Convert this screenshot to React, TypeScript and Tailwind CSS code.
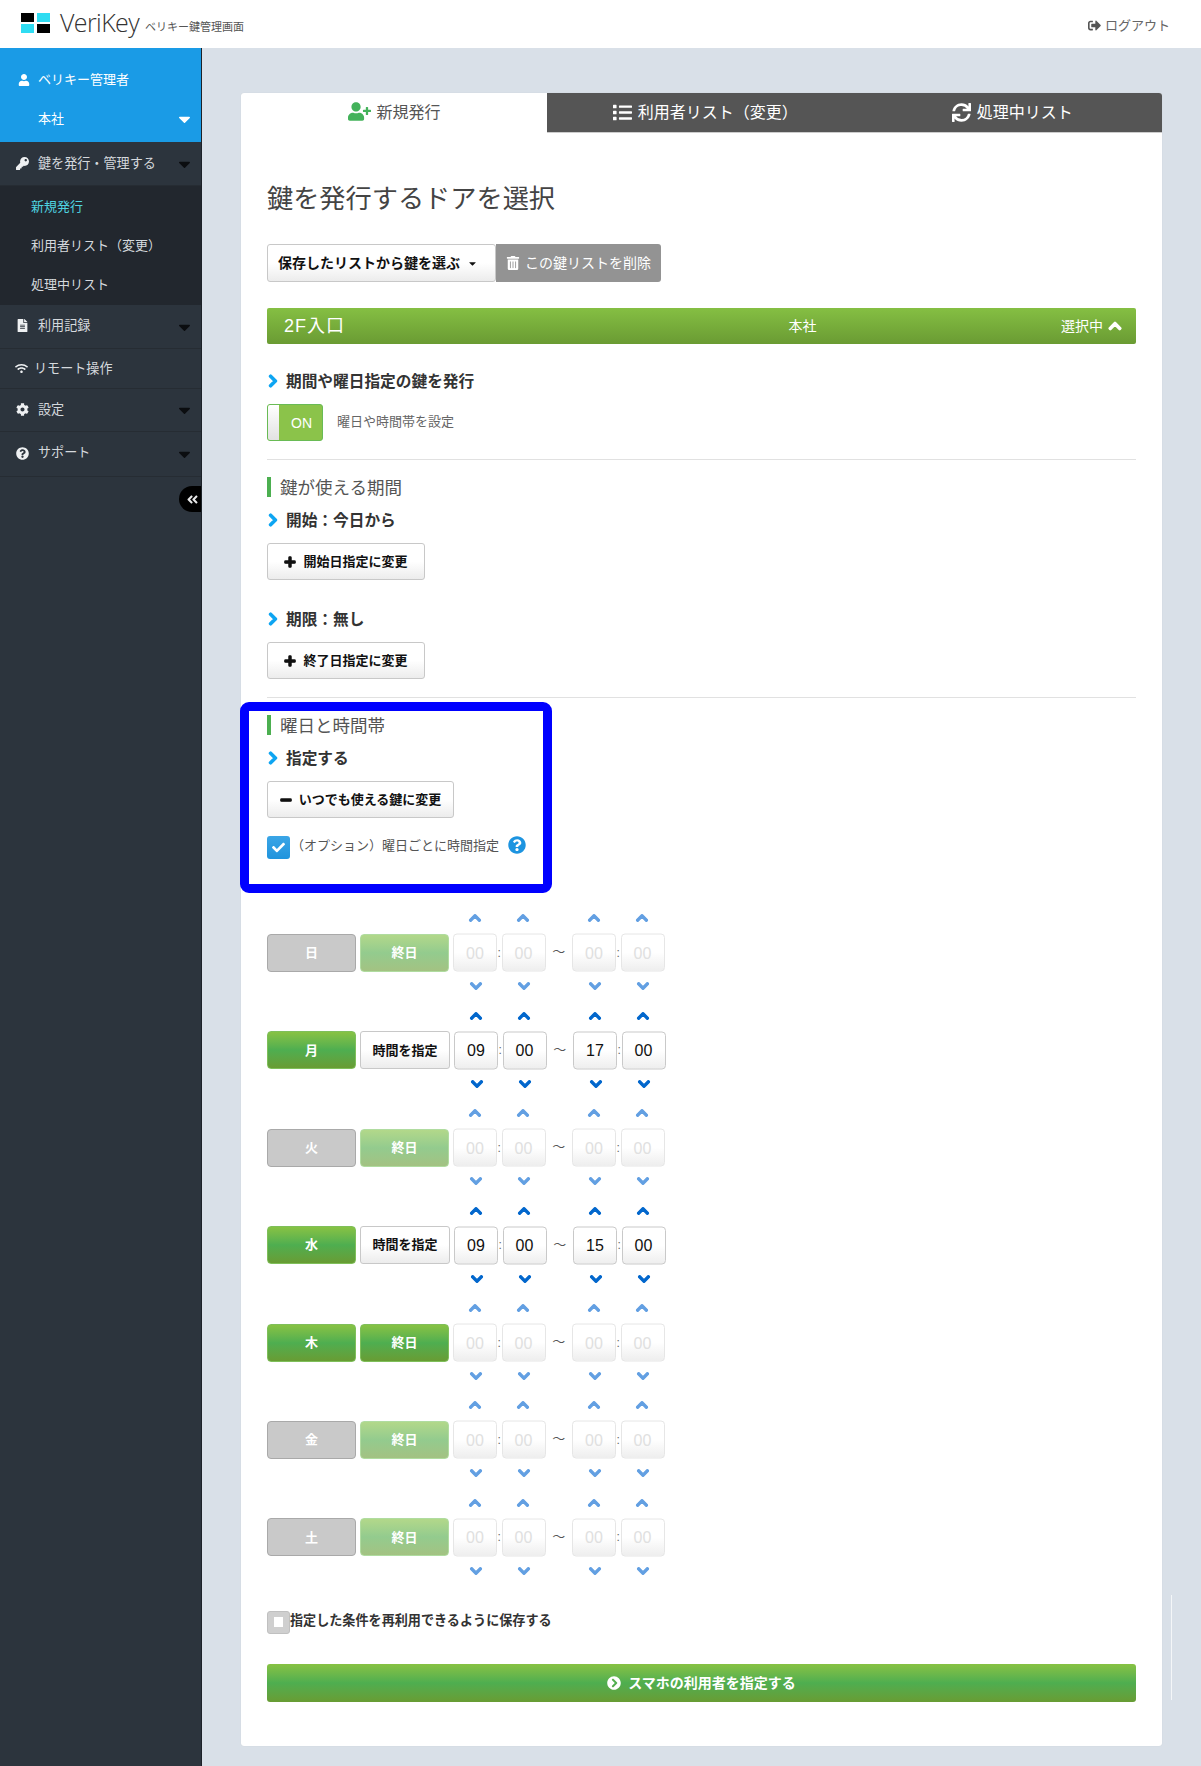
import React from "react";
import {
  FaUser, FaKey, FaFileAlt, FaWifi, FaCog, FaQuestionCircle, FaAngleDoubleLeft, FaUserPlus, FaList, FaSync,
  FaSignOutAlt, FaChevronUp, FaChevronDown, FaChevronRight, FaPlus, FaMinus, FaTrashAlt, FaCheck,
  FaChevronCircleRight, FaCaretDown,
} from "react-icons/fa";

const greenBtn = "bg-gradient-to-b from-[#87c243] via-[#4eae50] to-[#689c33]";
const whiteBtn = "bg-gradient-to-b from-white via-white to-[#ececec] border border-[#c8c8c8] rounded-[3px]";
const thick = "[stroke-width:50px]";

function Caret({ white }: { white?: boolean }) {
  return <FaCaretDown className={`absolute right-[7px] top-1/2 -translate-y-1/2 text-[19px] ${white ? "text-white" : "text-[#0b0d10]"}`} />;
}

function SideItem({ icon, label, h, caret, pl = "pl-[38px]", iconLeft = "left-[16px]", extra = "" }: { icon: React.ReactNode; label: string; h: string; caret?: boolean; pl?: string; iconLeft?: string; extra?: string }) {
  return (
    <div className={`relative flex items-center ${h} ${pl} ${extra} border-b border-[#262c33] text-[13.1px] text-[#d5d9dd]`}>
      <span className={`absolute ${iconLeft} text-[#eef0f2] text-[13px]`}>{icon}</span>
      {label}
      {caret && <Caret />}
    </div>
  );
}

function Heading({ children }: { children: React.ReactNode }) {
  return (
    <div className="flex items-center h-6 pt-[2px] text-[15.7px] font-bold text-[#333]">
      <FaChevronRight className={`text-[#0ea5f2] text-[14px] mr-[6px] ml-[-1px] mt-[-2px] ${thick}`} />
      {children}
    </div>
  );
}

function Section({ children, className = "" }: { children: React.ReactNode; className?: string }) {
  return (
    <div className={`flex items-center h-5 text-[17.5px] text-[#555] ${className}`}>
      <span className="w-1 h-5 bg-[#4caf50] mr-[9px]" />
      <span className="mt-[2px]">{children}</span>
    </div>
  );
}

function ActionBtn({ icon, label, w, className = "" }: { icon: React.ReactNode; label: string; w: string; className?: string }) {
  return (
    <div className={`flex items-center justify-center gap-[7px] h-[37px] ${w} ${whiteBtn} text-[13px] font-bold text-[#111] ${className}`}>
      {icon}
      {label}
    </div>
  );
}

function TimeBox({ v, on }: { v: string; on: boolean }) {
  return (
    <div className="flex flex-col items-center justify-center gap-[9px] w-[44px] pb-[1px]">
      <FaChevronUp className={`text-[13px] -translate-x-[0.5px] translate-y-[0.5px] ${thick} ${on ? "text-[#0066cc]" : "text-[#629fe2]"}`} />
      <div className={`flex items-center justify-center w-[44px] h-[38px] pt-[1px] rounded-[4px] translate-y-[0.5px] bg-gradient-to-b from-white via-white to-[#eeeeee] border ${on ? "border-[#c9c9c9] text-[#111]" : "border-[#e6e6e6] text-[#e0e0e0]"} text-[16px] font-['Liberation_Sans',sans-serif]`}>
        {v}
      </div>
      <FaChevronDown className={`text-[13px] translate-x-[0.5px] -translate-y-[0.5px] ${thick} ${on ? "text-[#0066cc]" : "text-[#629fe2]"}`} />
    </div>
  );
}

function Colon() {
  return <span className="w-[4.5px] text-center text-[12px] text-[#666] leading-none">:</span>;
}

type Row = { day: string; dayOn: boolean; mode: "off" | "all" | "time"; t?: [string, string, string, string] };

const rows: Row[] = [
  { day: "日", dayOn: false, mode: "off" },
  { day: "月", dayOn: true, mode: "time", t: ["09", "00", "17", "00"] },
  { day: "火", dayOn: false, mode: "off" },
  { day: "水", dayOn: true, mode: "time", t: ["09", "00", "15", "00"] },
  { day: "木", dayOn: true, mode: "all" },
  { day: "金", dayOn: false, mode: "off" },
  { day: "土", dayOn: false, mode: "off" },
];

function DayRow({ r }: { r: Row }) {
  const on = r.mode === "time";
  const t = r.t ?? ["00", "00", "00", "00"];
  return (
    <div className="flex items-center h-[97.4px]">
      <div className={`flex items-center justify-center w-[89px] h-[38px] rounded-[4px] text-[13px] font-bold text-white ${r.dayOn ? greenBtn + " border border-[#7fbf5a]" : "bg-[#c9c9c9] border border-[#a9a9a9]"}`}>
        {r.day}
      </div>
      {on ? (
        <div className={`flex items-center justify-center ml-[4px] w-[90px] h-[38px] ${whiteBtn} text-[13px] font-bold text-[#111]`}>時間を指定</div>
      ) : (
        <div className={`flex items-center justify-center ml-[4px] w-[89px] h-[38px] rounded-[4px] text-[13px] font-bold text-white ${r.day === "木" ? greenBtn + " border border-[#7fbf5a]" : "bg-gradient-to-b from-[#b2d88a] via-[#93cb8e] to-[#a3c282] border border-[#b0dca0]"}`}>
          終日
        </div>
      )}
      <div className="flex items-center ml-[4px]">
        <TimeBox v={t[0]} on={on} />
        <Colon />
        <TimeBox v={t[1]} on={on} />
        <span className="w-[26.5px] text-center text-[13px] text-[#555] leading-none mt-[-2px]">〜</span>
        <TimeBox v={t[2]} on={on} />
        <Colon />
        <TimeBox v={t[3]} on={on} />
      </div>
    </div>
  );
}

export default function App() {
  return (
    <div className="w-[1201px] h-[1766px] flex flex-col bg-[#d9e0e8] font-['Liberation_Sans','Noto_Sans_CJK_JP',sans-serif] overflow-hidden">
      {/* header */}
      <header className="flex items-center h-[48px] bg-white shrink-0 pl-[21px] pr-[31px]">
        <div className="grid grid-cols-[13px_13px] grid-rows-[9px_9px] gap-x-[3px] gap-y-[2px] mt-[-3px]">
          <span className="bg-black" />
          <span className="bg-[#2fdcf2]" />
          <span className="bg-[#2fdcf2]" />
          <span className="bg-black" />
        </div>
        <span className="ml-[10px] text-[25px] font-light text-[#333] font-['Open_Sans',sans-serif] tracking-[-0.6px] mt-[-2px]">VeriKey</span>
        <span className="ml-[6px] mt-[7px] text-[11px] text-[#555]">ベリキー鍵管理画面</span>
        <div className="ml-auto flex items-center gap-[4px] text-[13px] text-[#666] mt-[3px]">
          <FaSignOutAlt className="text-[13px] text-[#555]" />
          ログアウト
        </div>
      </header>

      <div className="flex flex-1 min-h-0">
        {/* sidebar */}
        <aside className="relative w-[202px] shrink-0 bg-[#2c343d] border-r border-[#1d2228]">
          <div className="h-[94px] bg-[#1a9be6] text-white text-[13px]">
            <div className="relative flex items-center h-[64px] pl-[38px]">
              <FaUser className="absolute left-[18px] text-[12px]" />
              ベリキー管理者
            </div>
            <div className="relative flex items-center h-[14px] pl-[38px]">
              本社
              <Caret white />
            </div>
          </div>
          <SideItem icon={<FaKey />} label="鍵を発行・管理する" h="h-[44px]" caret />
          <div className="flex flex-col bg-[#22272e] h-[119px] pt-[1px] text-[13px] pl-[31px] text-[#d5d9dd]">
            <div className="flex items-center h-[39px] text-[#4fd3e0]">新規発行</div>
            <div className="flex items-center h-[39px]">利用者リスト（変更）</div>
            <div className="flex items-center h-[39px]">処理中リスト</div>
          </div>
          <SideItem icon={<FaFileAlt />} label="利用記録" h="h-[44px]" extra="pb-[2px]" caret />
          <SideItem icon={<FaWifi />} label="リモート操作" h="h-[40px]" pl="pl-[34px]" iconLeft="left-[15px]" />
          <SideItem icon={<FaCog />} label="設定" h="h-[43px]" extra="pb-[1px]" caret />
          <SideItem icon={<FaQuestionCircle />} label="サポート" h="h-[45px]" extra="pb-[2px]" caret />
          <div className="absolute left-[179px] top-[438px] flex items-center justify-center w-[22px] h-[26px] bg-black rounded-l-[13px] text-[#e8e8e8] text-[13px]">
            <FaAngleDoubleLeft className="translate-x-[2px]" />
          </div>
        </aside>

        {/* main */}
        <main className="relative pt-[45px] pl-[39px]">
          <div className="absolute left-[969px] top-[1547px] w-px h-[105px] bg-white/70" />
          <div className="relative w-[921px] bg-white rounded-[3px] shadow-[0_0_1px_rgba(0,0,0,0.12)]">
            {/* tabs */}
            <div className="grid grid-cols-[306px_307.5px_307.5px] h-[40px] text-[16px]">
              <div className="flex items-center justify-center gap-[6px] text-[#555]">
                <FaUserPlus className="text-[#43b25a] text-[23px] mt-[-3px] translate-x-[1px]" />
                新規発行
              </div>
              <div className="flex items-center justify-center gap-[6px] pl-[9px] bg-[#555] text-white border-b border-[#ccc]">
                <FaList className="text-[19px]" />
                利用者リスト（変更）
              </div>
              <div className="flex items-center justify-center gap-[6px] pl-[8px] bg-[#555] text-white border-b border-[#ccc] rounded-tr-[3px]">
                <FaSync className="text-[19px]" />
                処理中リスト
              </div>
            </div>

            {/* content */}
            <div className="px-[26px] pb-[44px]">
              <h1 className="mt-[50px] h-8 leading-8 text-[26.2px] font-normal text-[#444]">鍵を発行するドアを選択</h1>

              <div className="flex mt-[29px] h-[38px]">
                <div className={`flex items-center w-[229px] pl-[10px] ${whiteBtn} text-[14px] font-bold text-[#111]`}>
                  保存したリストから鍵を選ぶ
                  <FaCaretDown className="ml-[7px] text-[11px]" />
                </div>
                <div className="flex items-center justify-center gap-[5px] w-[165px] bg-[#939393] rounded-r-[3px] text-[14px] text-white">
                  <FaTrashAlt className="text-[14px]" />
                  この鍵リストを削除
                </div>
              </div>

              <div className="flex items-center mt-[26px] h-[36px] rounded-[2px] bg-gradient-to-b from-[#85bf43] to-[#6a9b33] text-white">
                <span className="w-[500px] pl-[17px] text-[18px] tracking-[1px]">2F入口</span>
                <span className="w-[70px] text-center text-[14px] pl-[1px]">本社</span>
                <span className="ml-auto flex items-center gap-[5px] pr-[14px] text-[14px]">
                  選択中
                  <FaChevronUp className={`text-[14px] ${thick}`} />
                </span>
              </div>

              <div className="mt-[25px]"><Heading>期間や曜日指定の鍵を発行</Heading></div>
              <div className="flex items-center mt-[11px]">
                <div className="relative flex items-center justify-end w-[56px] h-[37px] pt-[2px] rounded-[3px] bg-[#8bc34a] border border-[#69bb55] pr-[10px] text-[14px] text-white">
                  ON
                  <span className="absolute left-0 top-0 bottom-0 w-[11px] bg-gradient-to-b from-white to-[#e2e2e2] rounded-l-[2px]" />
                </div>
                <span className="ml-[14px] text-[13px] text-[#666] mt-[-2px]">曜日や時間帯を設定</span>
              </div>
              <hr className="mt-[18px] border-0 h-px bg-[#e1e1e1]" />

              <Section className="mt-[17px]">鍵が使える期間</Section>
              <div className="mt-[11px]"><Heading>開始：今日から</Heading></div>
              <ActionBtn className="mt-[11px]" w="w-[158px]" icon={<FaPlus className={`text-[12px] ${thick}`} />} label="開始日指定に変更" />
              <div className="mt-[27px]"><Heading>期限：無し</Heading></div>
              <ActionBtn className="mt-[11px]" w="w-[158px]" icon={<FaPlus className={`text-[12px] ${thick}`} />} label="終了日指定に変更" />
              <hr className="mt-[18px] border-0 h-px bg-[#e1e1e1]" />

              <Section className="mt-[17px]">曜日と時間帯</Section>
              <div className="mt-[11px]"><Heading>指定する</Heading></div>
              <ActionBtn className="mt-[11px]" w="w-[187px]" icon={<FaMinus className={`text-[12px] ${thick}`} />} label="いつでも使える鍵に変更" />
              <div className="flex items-center mt-[18px] h-[23px]">
                <span className="flex items-center justify-center w-[23px] h-[23px] rounded-[3px] bg-gradient-to-b from-[#3aa5e6] to-[#1f94dd] text-white text-[13px]">
                  <FaCheck />
                </span>
                <span className="ml-[1px] text-[13px] text-[#555] mt-[-3px]">（オプション）曜日ごとに時間指定</span>
                <FaQuestionCircle className="ml-[9px] text-[#1d94e0] text-[18px] mt-[-5px]" />
              </div>

              <div className="mt-[45.3px]">
                {rows.map((r) => (
                  <DayRow key={r.day} r={r} />
                ))}
              </div>

              <div className="flex items-center mt-[25px] h-[22px]">
                <span className="flex items-center justify-center w-[23px] h-[23px] rounded-[3px] bg-[#cfcfcf] border border-[#c0c0c0]">
                  <span className="w-[9px] h-[10px] bg-white" />
                </span>
                <span className="text-[13.1px] font-bold text-[#333] mt-[-2px]">指定した条件を再利用できるように保存する</span>
              </div>

              <div className={`flex items-center justify-center gap-[7px] mt-[31px] h-[38px] rounded-[3px] ${greenBtn} text-[14px] font-bold text-white`}>
                <FaChevronCircleRight className="text-[14px]" />
                スマホの利用者を指定する
              </div>
            </div>

            {/* annotation */}
            <div className="absolute left-[-1px] top-[609px] w-[312px] h-[191px] border-[9px] border-[#0000ff] rounded-[9px] pointer-events-none" />
          </div>
        </main>
      </div>
    </div>
  );
}
